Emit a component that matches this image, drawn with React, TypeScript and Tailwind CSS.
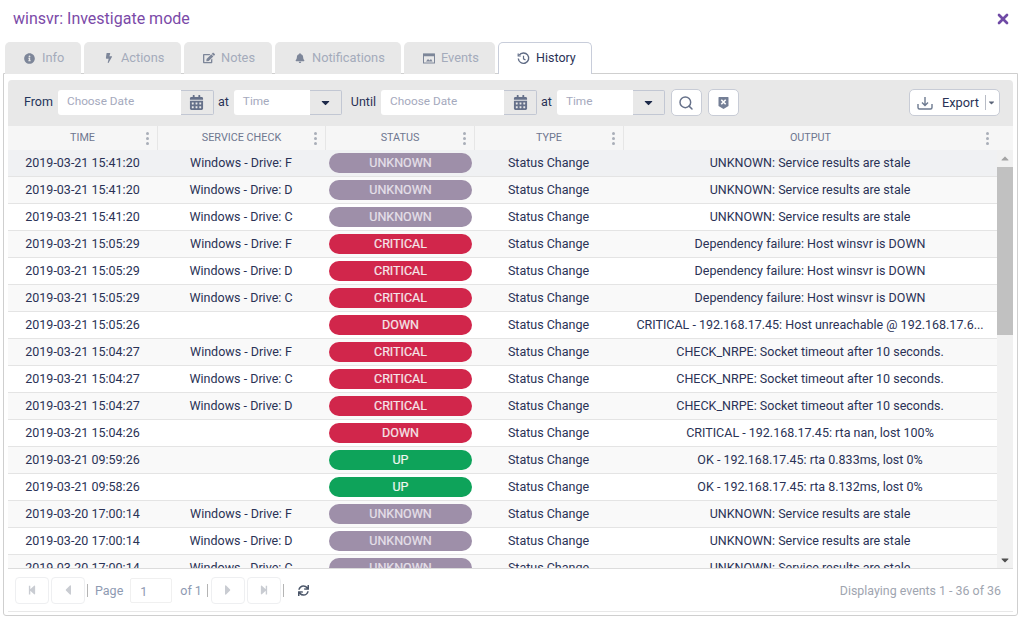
import { Search, X } from 'lucide-react'
import { FaBolt, FaBell, FaCalendarAlt, FaCaretDown, FaCaretLeft, FaCaretRight, FaEdit, FaInfoCircle, FaStepBackward, FaStepForward, FaSync } from 'react-icons/fa'

const tabs = [
  { name: 'Info', w: 'w-[76px]', icon: <FaInfoCircle size={11} /> },
  { name: 'Actions', w: 'w-[97px]', icon: <FaBolt size={10} /> },
  { name: 'Notes', w: 'w-[88px]', icon: <FaEdit size={12} /> },
  { name: 'Notifications', w: 'w-[126px]', icon: <FaBell size={10} /> },
  { name: 'Events', w: 'w-[91px]', icon: <EventsIcon /> },
]

const stale = 'UNKNOWN: Service results are stale'
const dep = 'Dependency failure: Host winsvr is DOWN'
const nrpe = 'CHECK_NRPE: Socket timeout after 10 seconds.'

const rows = [
  ['2019-03-21 15:41:20', 'Windows - Drive: F', 'UNKNOWN', stale],
  ['2019-03-21 15:41:20', 'Windows - Drive: D', 'UNKNOWN', stale],
  ['2019-03-21 15:41:20', 'Windows - Drive: C', 'UNKNOWN', stale],
  ['2019-03-21 15:05:29', 'Windows - Drive: F', 'CRITICAL', dep],
  ['2019-03-21 15:05:29', 'Windows - Drive: D', 'CRITICAL', dep],
  ['2019-03-21 15:05:29', 'Windows - Drive: C', 'CRITICAL', dep],
  ['2019-03-21 15:05:26', '', 'DOWN', 'CRITICAL - 192.168.17.45: Host unreachable @ 192.168.17.6...'],
  ['2019-03-21 15:04:27', 'Windows - Drive: F', 'CRITICAL', nrpe],
  ['2019-03-21 15:04:27', 'Windows - Drive: C', 'CRITICAL', nrpe],
  ['2019-03-21 15:04:27', 'Windows - Drive: D', 'CRITICAL', nrpe],
  ['2019-03-21 15:04:26', '', 'DOWN', 'CRITICAL - 192.168.17.45: rta nan, lost 100%'],
  ['2019-03-21 09:59:26', '', 'UP', 'OK - 192.168.17.45: rta 0.833ms, lost 0%'],
  ['2019-03-21 09:58:26', '', 'UP', 'OK - 192.168.17.45: rta 8.132ms, lost 0%'],
  ['2019-03-20 17:00:14', 'Windows - Drive: F', 'UNKNOWN', stale],
  ['2019-03-20 17:00:14', 'Windows - Drive: D', 'UNKNOWN', stale],
  ['2019-03-20 17:00:14', 'Windows - Drive: C', 'UNKNOWN', stale],
]

const headers = [
  { name: 'TIME', w: 'w-[150px] border-r' },
  { name: 'SERVICE CHECK', w: 'w-[168px] border-r' },
  { name: 'STATUS', w: 'w-[149px] border-r' },
  { name: 'TYPE', w: 'w-[149px] border-r' },
  { name: 'OUTPUT', w: 'w-[373px]' },
]

function EventsIcon() {
  return (
    <svg width="12" height="11" viewBox="0 0 12 11" fill="none" stroke="currentColor">
      <rect x="0.5" y="1" width="11" height="9" strokeWidth="1" />
      <rect x="0.5" y="1" width="11" height="2" fill="currentColor" strokeWidth="0.5" />
      <path d="M3 8.5 5 6l1.500 1.500L8 6l1.500 2.500z" fill="currentColor" stroke="none" />
    </svg>
  )
}

function HistoryIcon() {
  return (
    <svg width="13" height="13" viewBox="0 0 13 13" fill="none" stroke="#5f6b85" strokeWidth="1.4">
      <path d="M2.200 3.200A5.200 5.200 0 1 1 1.300 6.500" />
      <path d="M1.200 1.400v2.600h2.600" strokeWidth="1.2" />
      <path d="M6.500 3.800v3l2 1.200" strokeWidth="1.2" />
    </svg>
  )
}

function ExportIcon() {
  return (
    <svg width="16" height="14" viewBox="0 0 16 14" fill="none" stroke="#6d7a90" strokeWidth="1.4">
      <path d="M1 8v3.500a1.500 1.500 0 0 0 1.500 1.500h11a1.500 1.500 0 0 0 1.500-1.500V8" />
      <path d="M8 1v8M5 6.500 8 9.500l3-3" />
    </svg>
  )
}

function ClearIcon() {
  return (
    <svg width="11" height="14" viewBox="0 0 11 14">
      <path d="M1 1h9a.5.5 0 0 1 .5.5V10L5.500 13 .5 10V1.500A.5.5 0 0 1 1 1z" fill="#747f96" />
      <path d="M3.300 3.800l4.400 4.400M7.700 3.800l-4.400 4.400" stroke="#fff" strokeWidth="1.6" />
    </svg>
  )
}

function Kebab() {
  return (
    <div className="absolute right-[8px] top-[6px] flex flex-col gap-[2px]">
      <span className="h-[3px] w-[3px] rounded-full bg-[#a9aeb8]" />
      <span className="h-[3px] w-[3px] rounded-full bg-[#a9aeb8]" />
      <span className="h-[3px] w-[3px] rounded-full bg-[#a9aeb8]" />
    </div>
  )
}

function DateField() {
  return (
    <div className="flex h-[25px] w-[156px]">
      <div className="flex-1 rounded-l-[3px] bg-white pl-[9px] text-[11.8px] leading-[23px] text-[#a5a9bd]">Choose Date</div>
      <div className="flex w-[33px] items-center justify-center rounded-r-[2px] border border-l-0 border-[#c2c7d3] text-[#66718a]">
        <FaCalendarAlt size={15} />
      </div>
    </div>
  )
}

function TimeField() {
  return (
    <div className="flex h-[25px] w-[108px]">
      <div className="flex-1 rounded-l-[3px] bg-white pl-[9px] text-[11.8px] leading-[23px] text-[#a5a9bd]">Time</div>
      <div className="flex w-[32px] items-center justify-center rounded-r-[2px] border border-l-0 border-[#c2c7d3] text-[#1d2a4a]">
        <FaCaretDown size={13} />
      </div>
    </div>
  )
}

function Pill({ status }: { status: string }) {
  const color = status === 'UNKNOWN' ? 'bg-[#9e8fa9] text-[#e6e0ea]' : status === 'UP' ? 'bg-[#0ea35a] text-[#f0f6f0]' : 'bg-[#d1264b] text-[#f5e6ea]'
  return (
    <div className={`h-[20px] w-[143px] rounded-[10px] text-center text-[12.5px] leading-[20px] [-webkit-text-stroke:0.2px] ${color}`}>
      {status}
    </div>
  )
}

function PageButton({ children }: { children: React.ReactNode }) {
  return (
    <div className="flex h-[27px] w-[34px] items-center justify-center rounded-[4px] border border-[#eeeff1] text-[#c9ccd2]">
      {children}
    </div>
  )
}

export default function App() {
  return (
    <div className="h-[618px] w-[1020px] overflow-hidden bg-white font-['Roboto',sans-serif] text-[12.5px] text-[#2a3256]">
      <div className="flex h-[42px] items-center justify-between pl-[13px] pr-[9px] pb-[5px]">
        <span className="text-[16px] text-[#7b4aa8]">winsvr: Investigate mode</span>
        <X size={16} strokeWidth={4} className="text-[#6f4aa5]" />
      </div>

      {/* Tabs */}
      <div className="flex h-[32px] gap-[3px] pl-[5px]">
        {tabs.map((t) => (
          <div key={t.name} className={`flex items-center gap-[6px] rounded-t-[5px] bg-[#e8e8e8] pl-[18px] text-[12.8px] text-[#a4abbb] ${t.w}`}>
            <span className="flex w-[13px] justify-center text-[#7d8699]">{t.icon}</span>
            {t.name}
          </div>
        ))}
        <div className="relative z-10 flex h-[32px] w-[94px] items-center gap-[6px] rounded-t-[5px] border border-b-0 border-[#c8cdda] bg-white pl-[18px] text-[12.5px] text-[#2a3256]">
          <HistoryIcon />
          History
        </div>
      </div>

      {/* Panel */}
      <div className="-mt-px ml-[3px] h-[543px] w-[1015px] rounded-b-[3px] border border-[#cfcfcf] p-[6px_4px_0_4px]">
        <div className="flex h-[46px] w-[1005px] items-center rounded-t-[4px] bg-[#e8e8e8] pb-px pl-[16px]">
          <span className="mr-[5px] text-[#24345a]">From</span>
          <DateField />
          <span className="ml-[4px] mr-[5px]">at</span>
          <TimeField />
          <span className="ml-[9px] mr-[5px]">Until</span>
          <DateField />
          <span className="ml-[4px] mr-[5px]">at</span>
          <TimeField />
          <div className="ml-[6px] flex h-[27px] w-[31px] items-center justify-center rounded-[5px] border border-[#c8ccd6] bg-white text-[#66718a]">
            <Search size={16} strokeWidth={2.2} />
          </div>
          <div className="ml-[6px] flex h-[27px] w-[31px] items-center justify-center rounded-[5px] border border-[#c8ccd6] bg-white">
            <ClearIcon />
          </div>
          <div className="ml-auto mr-[13px] flex h-[27px] w-[91px] items-center rounded-[5px] border border-[#c8ccd6] bg-white pl-[7px] text-[12.8px] text-[#2a3256]">
            <ExportIcon />
            <span className="ml-[9px]">Export</span>
            <span className="ml-[6px] h-[15px] w-px bg-[#b8bcc6]" />
            <FaCaretDown size={9} className="ml-[1px] text-[#5a6478]" />
          </div>
        </div>

        {/* Table header */}
        <div className="flex h-[24px] w-[1005px] bg-[#f6f6f6] text-[10.8px] text-[#6e7790]">
          {headers.map((h) => (
            <div key={h.name} className={`relative border-[#e6e6e6] text-center leading-[23px] ${h.w}`}>
              {h.name}
              <Kebab />
            </div>
          ))}
        </div>

        {/* Rows */}
        <div className="flex h-[419px] w-[1005px] overflow-hidden border-b border-[#dcdcdc]">
          <div className="w-[989px] overflow-hidden">
            {rows.map((r, i) => (
              <div key={i} className={`flex h-[27px] shrink-0 items-center border-b border-[#e4e4e4] ${i === 0 ? 'bg-[#f0f1f3]' : i % 2 === 1 ? 'bg-[#f9f9f9]' : 'bg-white'}`}>
                <div className="w-[149px] text-center">{r[0]}</div>
                <div className="w-[168px] text-center">{r[1]}</div>
                <div className="w-[149px] pl-[4px]"><Pill status={r[2]} /></div>
                <div className="w-[149px] text-center">Status Change</div>
                <div className="flex-1 truncate px-[8px] text-center">{r[3]}</div>
              </div>
            ))}
          </div>
          <div className="flex w-[16px] flex-col items-center bg-[#f1f1f1]">
            <div className="flex h-[17px] items-center text-[#a3a3a3]"><FaCaretDown size={12} className="rotate-180" /></div>
            <div className="h-[168px] w-full bg-[#c1c1c1]" />
            <div className="mt-auto flex h-[17px] items-center text-[#505050]"><FaCaretDown size={12} /></div>
          </div>
        </div>

        {/* Pager */}
        <div className="flex h-[43px] w-[1005px] items-center border-b border-[#e8e8e8] pl-[7px] pr-[12px] text-[#8e9ab2]">
          <div className="flex items-center gap-[2px]">
            <PageButton><FaStepBackward size={10} /></PageButton>
            <PageButton><FaCaretLeft size={16} /></PageButton>
          </div>
          <span className="ml-[2px] mr-[7px] h-[13px] w-px bg-[#b4b4b4]" />
          <span className="pt-[2px]">Page</span>
          <div className="ml-[7px] h-[25px] w-[42px] rounded-[2px] border border-[#f0f0f0] pl-[9px] leading-[25px]">1</div>
          <span className="ml-[8px] pt-[2px]">of 1</span>
          <span className="ml-[5px] mr-[3px] h-[13px] w-px bg-[#b4b4b4]" />
          <div className="flex items-center gap-[2px]">
            <PageButton><FaCaretRight size={16} /></PageButton>
            <PageButton><FaStepForward size={10} /></PageButton>
          </div>
          <span className="ml-[2px] h-[13px] w-px bg-[#b4b4b4]" />
          <FaSync size={11} className="ml-[14px] text-[#4a5568]" />
          <span className="ml-auto pt-[2px] text-[12.4px] text-[#a0a5b0]">Displaying events 1 - 36 of 36</span>
        </div>
      </div>
    </div>
  )
}
